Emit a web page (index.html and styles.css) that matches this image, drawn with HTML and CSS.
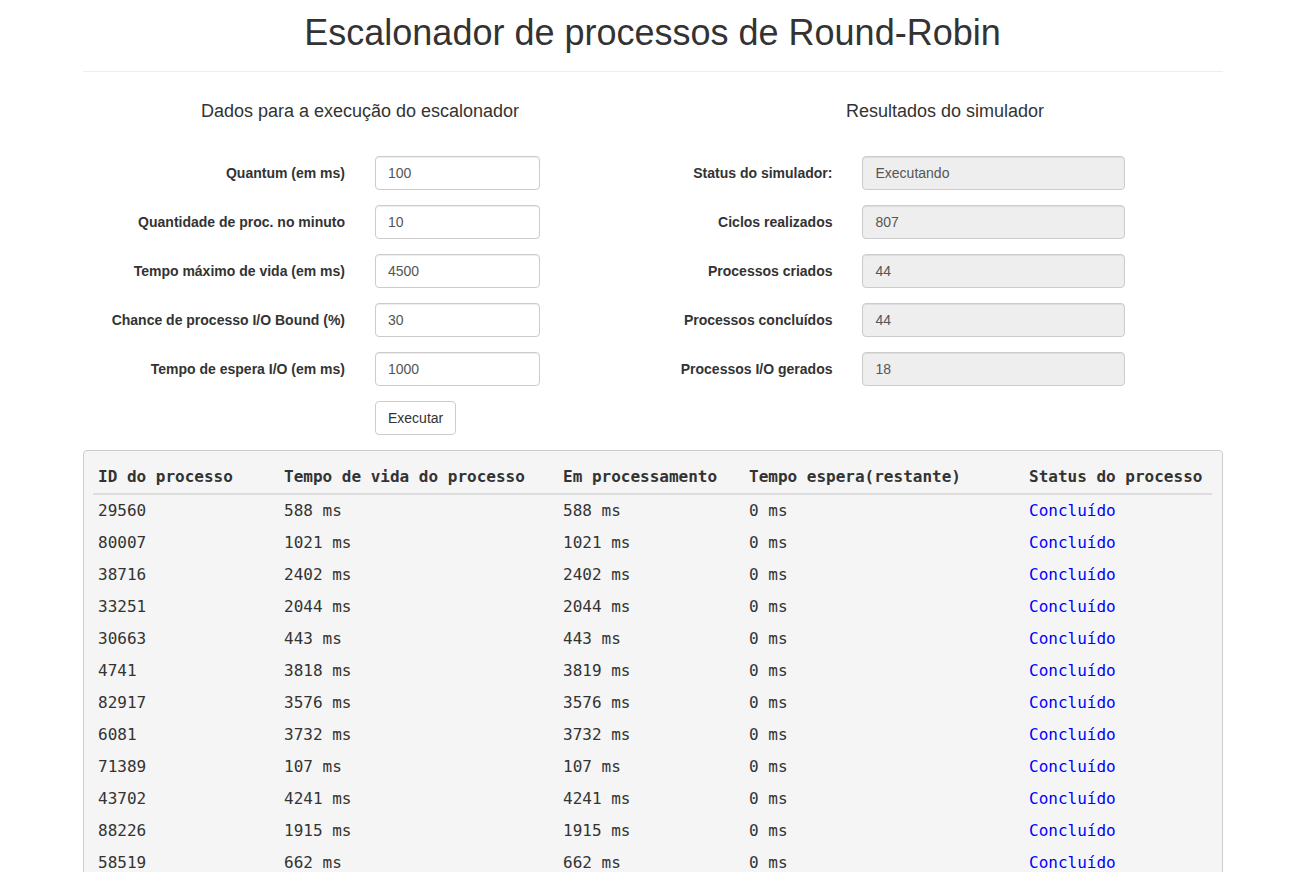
FILE: index.html
```html
<!DOCTYPE html>
<html lang="pt-BR">
<head>
<meta charset="utf-8">
<title>Escalonador Round-Robin</title>
<link rel="stylesheet" href="styles.css">
</head>
<body>
<div class="container">
  <header class="page-header">
    <h1 class="title">Escalonador de processos de Round-Robin</h1>
  </header>

  <div class="row">
    <section class="col">
      <h4 class="col-title">Dados para a execução do escalonador</h4>
      <form class="form form-left">
        <div class="form-group">
          <label class="label">Quantum (em ms)</label>
          <div class="field"><input class="input" type="text" value="100"></div>
        </div>
        <div class="form-group">
          <label class="label">Quantidade de proc. no minuto</label>
          <div class="field"><input class="input" type="text" value="10"></div>
        </div>
        <div class="form-group">
          <label class="label">Tempo máximo de vida (em ms)</label>
          <div class="field"><input class="input" type="text" value="4500"></div>
        </div>
        <div class="form-group">
          <label class="label">Chance de processo I/O Bound (%)</label>
          <div class="field"><input class="input" type="text" value="30"></div>
        </div>
        <div class="form-group">
          <label class="label">Tempo de espera I/O (em ms)</label>
          <div class="field"><input class="input" type="text" value="1000"></div>
        </div>
        <div class="form-group">
          <div class="label"></div>
          <div class="field"><button type="button" class="btn">Executar</button></div>
        </div>
      </form>
    </section>

    <section class="col">
      <h4 class="col-title">Resultados do simulador</h4>
      <form class="form form-right">
        <div class="form-group">
          <label class="label">Status do simulador:</label>
          <div class="field"><input class="input readonly" type="text" value="Executando" readonly></div>
        </div>
        <div class="form-group">
          <label class="label">Ciclos realizados</label>
          <div class="field"><input class="input readonly" type="text" value="807" readonly></div>
        </div>
        <div class="form-group">
          <label class="label">Processos criados</label>
          <div class="field"><input class="input readonly" type="text" value="44" readonly></div>
        </div>
        <div class="form-group">
          <label class="label">Processos concluídos</label>
          <div class="field"><input class="input readonly" type="text" value="44" readonly></div>
        </div>
        <div class="form-group">
          <label class="label">Processos I/O gerados</label>
          <div class="field"><input class="input readonly" type="text" value="18" readonly></div>
        </div>
      </form>
    </section>
  </div>

  <div class="pre">
    <table class="proc-table">
      <colgroup>
        <col class="c1"><col class="c2"><col class="c3"><col class="c4"><col class="c5">
      </colgroup>
      <thead>
        <tr><th>ID do processo</th><th>Tempo de vida do processo</th><th>Em processamento</th><th>Tempo espera(restante)</th><th>Status do processo</th></tr>
      </thead>
      <tbody>
        <tr><td>29560</td><td>588 ms</td><td>588 ms</td><td>0 ms</td><td class="done">Concluído</td></tr>
        <tr><td>80007</td><td>1021 ms</td><td>1021 ms</td><td>0 ms</td><td class="done">Concluído</td></tr>
        <tr><td>38716</td><td>2402 ms</td><td>2402 ms</td><td>0 ms</td><td class="done">Concluído</td></tr>
        <tr><td>33251</td><td>2044 ms</td><td>2044 ms</td><td>0 ms</td><td class="done">Concluído</td></tr>
        <tr><td>30663</td><td>443 ms</td><td>443 ms</td><td>0 ms</td><td class="done">Concluído</td></tr>
        <tr><td>4741</td><td>3818 ms</td><td>3819 ms</td><td>0 ms</td><td class="done">Concluído</td></tr>
        <tr><td>82917</td><td>3576 ms</td><td>3576 ms</td><td>0 ms</td><td class="done">Concluído</td></tr>
        <tr><td>6081</td><td>3732 ms</td><td>3732 ms</td><td>0 ms</td><td class="done">Concluído</td></tr>
        <tr><td>71389</td><td>107 ms</td><td>107 ms</td><td>0 ms</td><td class="done">Concluído</td></tr>
        <tr><td>43702</td><td>4241 ms</td><td>4241 ms</td><td>0 ms</td><td class="done">Concluído</td></tr>
        <tr><td>88226</td><td>1915 ms</td><td>1915 ms</td><td>0 ms</td><td class="done">Concluído</td></tr>
        <tr><td>58519</td><td>662 ms</td><td>662 ms</td><td>0 ms</td><td class="done">Concluído</td></tr>
      </tbody>
    </table>
  </div>
</div>
</body>
</html>
```

FILE: styles.css
```css
* { box-sizing: border-box; }

html, body {
  margin: 0;
  padding: 0;
  background: #fff;
}

body {
  font-family: "Liberation Sans", Arial, Helvetica, sans-serif;
  font-size: 14px;
  line-height: 1.42857;
  color: #333;
}

.container {
  width: 1140px;
  margin-left: calc(50% - 565px);
}

.page-header {
  border-bottom: 1px solid #eee;
  padding: 13px 0 18px;
}

.title {
  margin: 0;
  font-size: 36px;
  font-weight: 400;
  line-height: 40px;
  text-align: center;
  color: #333;
}

.row {
  display: flex;
  margin: 0 -15px;
}

.col {
  width: 50%;
  padding: 0 15px;
}

.col-title {
  margin: 29px 0 35px;
  font-size: 18px;
  font-weight: 400;
  line-height: 20px;
  text-align: center;
  color: #333;
}

.form {
  margin: 0 -15px;
}

.form-group {
  display: flex;
  margin-bottom: 15px;
}

.label {
  padding: 7px 15px 0;
  font-weight: 700;
  text-align: right;
  line-height: 20px;
  min-height: 1px;
}

.field {
  padding: 0 15px;
}

.form-left .label { width: 50%; }
.form-left .field { width: 33.3333%; }
.form-right .label { width: 33.3333%; }
.form-right .field { width: 50%; }

.input {
  display: block;
  width: 100%;
  height: 34px;
  padding: 6px 12px;
  font-family: inherit;
  font-size: 14px;
  line-height: 20px;
  color: #555;
  background: #fff;
  border: 1px solid #ccc;
  border-radius: 4px;
  box-shadow: inset 0 1px 1px rgba(0,0,0,.075);
  outline: none;
}

.input.readonly {
  background: #eee;
}

.btn {
  display: inline-block;
  height: 34px;
  padding: 6px 12px;
  font-family: inherit;
  font-size: 14px;
  line-height: 20px;
  color: #333;
  background: #fff;
  border: 1px solid #ccc;
  border-radius: 4px;
  cursor: pointer;
}

.pre {
  margin: 0 0 10px;
  padding: 9.5px;
  background: #f5f5f5;
  border: 1px solid #ccc;
  border-radius: 4px;
}

.proc-table {
  width: 100%;
  table-layout: fixed;
  border-collapse: collapse;
  font-family: "DejaVu Sans Mono", monospace;
  font-size: 16px;
  line-height: 22px;
  color: #333;
}

.c1 { width: 186px; }
.c2 { width: 279px; }
.c3 { width: 186px; }
.c4 { width: 280px; }
.c5 { width: 188px; }

.proc-table th,
.proc-table td {
  padding: 5px;
  text-align: left;
  white-space: nowrap;
  vertical-align: top;
}

.proc-table th {
  font-weight: 700;
  border-bottom: 2px solid #ddd;
}

.proc-table td.done {
  color: #0000ff;
}
```
